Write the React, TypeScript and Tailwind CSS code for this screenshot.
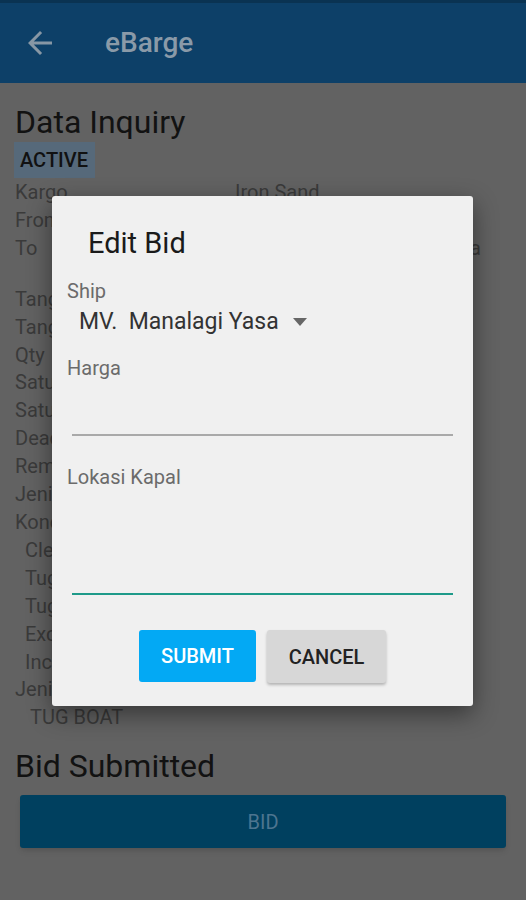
import React from 'react';

const rows = [
    { label: "Kargo", value: "Iron Sand" },
    { label: "From", value: "" },
    { label: "To", value: "Muara Pantai 2 - Samarinda", extra: true },
    { label: "Tanggal Muat", value: "" },
    { label: "Tanggal Bongkar", value: "" },
    { label: "Qty", value: "" },
    { label: "Satuan", value: "" },
    { label: "Satuan Harga", value: "" },
    { label: "Deadline", value: "" },
    { label: "Remarks", value: "" },
    { label: "Jenis Muatan", value: "" },
    { label: "Kondisi", value: "" },
    { label: "Clean", value: "", indent: true },
    { label: "Tug Assist", value: "", indent: true },
    { label: "Tug Boat", value: "", indent: true },
    { label: "Exclude PPN", value: "", indent: true },
    { label: "Include Asuransi", value: "", indent: true },
    { label: "Jenis Kapal", value: "" },
];

const App = () => {
    return (
        <div className="relative w-[526px] h-[900px] overflow-hidden bg-[#626262] font-['Roboto','Liberation_Sans',sans-serif]">

            {/* App bar */}
            <header className="h-[83px] bg-[#0d4068] border-t-[3px] border-[#0a3352] flex items-center">
                <svg className="ml-[22px]" width="36" height="36" viewBox="0 0 24 24" fill="#8797a5">
                    <path d="M20 11H7.83l5.59-5.59L12 4l-8 8 8 8 1.41-1.41L7.83 13H20v-2z" />
                </svg>
                <span className="ml-[47px] text-[28px] font-medium text-[#8a9aa8]">eBarge</span>
            </header>

            {/* Page content (dimmed behind the dialog) */}
            <main className="px-[15px]">
                <h1 className="mt-[20px] text-[32px] leading-[38px] text-[#121212]">Data Inquiry</h1>
                <span className="inline-block mt-[1px] -ml-px w-[81px] h-[36px] bg-[#56697a] pl-[6px] text-[20px] leading-[36px] font-medium text-[#111]">
                    ACTIVE
                </span>
                <div className="mt-[1px] text-[20px] leading-[27.9px] text-[#3a3a3a]">
                    {rows.map((r, i) => (
                        <div key={i} className={r.extra ? "mb-[23px]" : ""}>
                            <div className="flex">
                                <span className={r.indent ? "w-[220px] pl-[10px]" : "w-[220px]"}>{r.label}</span>
                                <span className="whitespace-nowrap">{r.value}</span>
                            </div>
                        </div>
                    ))}
                    <div className="pl-[15px]">TUG BOAT</div>
                </div>
                <h2 className="mt-[15px] text-[32px] leading-[38px] text-[#121212]">Bid Submitted</h2>
                <button className="mt-[10px] ml-[5px] w-[486px] h-[53px] rounded-[3px] bg-[#00405f] shadow-md text-[20px] text-[#4d7590]">
                    BID
                </button>
            </main>

            {/* Edit Bid dialog */}
            <div className="absolute left-[52px] top-[196px] w-[421px] h-[510px] rounded-[3px] bg-[#f0f0f0] shadow-[0_8px_24px_rgba(0,0,0,0.45)] flex flex-col pt-[30px]">
                <h3 className="pl-[36px] text-[29px] leading-[34px] text-[#1a1a1a]">Edit Bid</h3>

                <label className="mt-[18px] pl-[15px] text-[20px] leading-[26px] text-[#6b6b6b]">Ship</label>
                <div className="mt-[3px] pl-[27px] flex items-center">
                    <span className="whitespace-pre text-[23px] leading-[30px] text-[#333]">MV.  Manalagi Yasa</span>
                    <svg className="ml-[14px]" width="14" height="8" viewBox="0 0 14 8" fill="#666">
                        <path d="M0 0h14L7 8z" />
                    </svg>
                </div>

                <label className="mt-[18px] pl-[15px] text-[20px] leading-[26px] text-[#6b6b6b]">Harga</label>
                <div className="mt-[53px] mx-[20px] h-[2px] bg-[#a9a9a9]" />

                <label className="mt-[28px] pl-[15px] text-[20px] leading-[26px] text-[#6b6b6b]">Lokasi Kapal</label>
                <div className="mt-[103px] mx-[20px] h-[2px] bg-[#1e9a89]" />

                <div className="mt-[35px] flex justify-center gap-[11px]">
                    <button className="w-[117px] h-[52px] rounded-[3px] bg-[#03a9f4] text-[20px] font-medium text-white">
                        SUBMIT
                    </button>
                    <button className="w-[119px] h-[53px] rounded-[3px] bg-[#d7d7d7] shadow-[0_2px_3px_rgba(0,0,0,0.25)] text-[20px] font-medium text-[#222]">
                        CANCEL
                    </button>
                </div>
            </div>
        </div>
    );
};

export default App;
